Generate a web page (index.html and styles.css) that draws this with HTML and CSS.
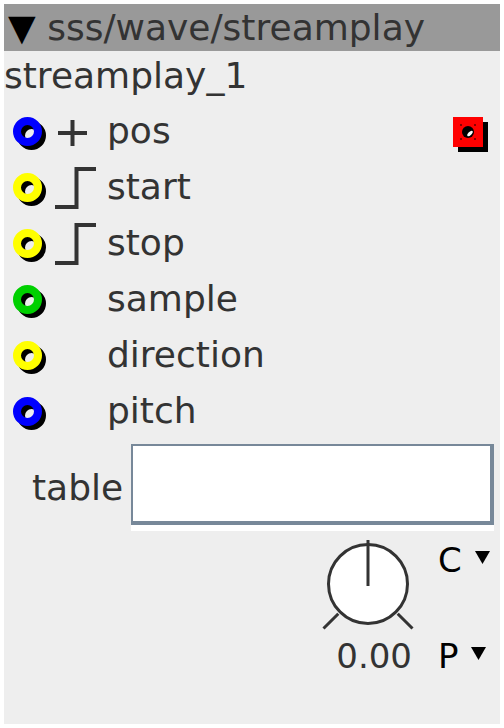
FILE: index.html
```html
<!DOCTYPE html>
<html lang="en">
<head>
    <meta charset="UTF-8">
    <meta name="viewport" content="width=device-width, initial-scale=1.0">
    <title>streamplay</title>
    <link rel="stylesheet" href="styles.css">
</head>
<body>
    <div class="panel">
        <!-- Node header -->
        <div class="head"><span class="arrow">▼</span> sss/wave/streamplay</div>
        <div class="name">streamplay_1</div>

        <!-- Inlets -->
        <div class="ports">
            <div class="port">
                <svg class="jack" width="38" height="38"><circle cx="18.5" cy="23.5" r="10.5" class="shade"/><circle cx="14.5" cy="19.5" r="10.5" stroke="#0000ff"/></svg>
                <svg class="kind" width="46" height="46"><path d="M5 25H34M19.5 12V38"/></svg>
                <span class="label">pos</span>
                <svg class="led" width="36" height="36">
                    <rect x="5" y="5" width="30" height="30" fill="#000"/>
                    <rect x="0" y="0" width="30" height="30" fill="#ff0000"/>
                    <rect x="7" y="7" width="2" height="2" fill="#800"/>
                    <rect x="21" y="7" width="2" height="2" fill="#800"/>
                    <rect x="7" y="21" width="2" height="2" fill="#800"/>
                    <rect x="21" y="21" width="2" height="2" fill="#800"/>
                    <circle cx="15" cy="15" r="6" fill="#000"/>
                    <ellipse cx="17" cy="16.5" rx="3.5" ry="1.6" fill="#fff" transform="rotate(-45 17 16.5)"/>
                </svg>
            </div>
            <div class="port">
                <svg class="jack" width="38" height="38"><circle cx="18.5" cy="23.5" r="10.5" class="shade"/><circle cx="14.5" cy="19.5" r="10.5" stroke="#ffff00"/></svg>
                <svg class="kind" width="46" height="46"><path d="M2 43H23.5V5H43"/></svg>
                <span class="label">start</span>
            </div>
            <div class="port">
                <svg class="jack" width="38" height="38"><circle cx="18.5" cy="23.5" r="10.5" class="shade"/><circle cx="14.5" cy="19.5" r="10.5" stroke="#ffff00"/></svg>
                <svg class="kind" width="46" height="46"><path d="M2 43H23.5V5H43"/></svg>
                <span class="label">stop</span>
            </div>
            <div class="port">
                <svg class="jack" width="38" height="38"><circle cx="18.5" cy="23.5" r="10.5" class="shade"/><circle cx="14.5" cy="19.5" r="10.5" stroke="#00d000"/></svg>
                <span></span>
                <span class="label">sample</span>
            </div>
            <div class="port">
                <svg class="jack" width="38" height="38"><circle cx="18.5" cy="23.5" r="10.5" class="shade"/><circle cx="14.5" cy="19.5" r="10.5" stroke="#ffff00"/></svg>
                <span></span>
                <span class="label">direction</span>
            </div>
            <div class="port">
                <svg class="jack" width="38" height="38"><circle cx="18.5" cy="23.5" r="10.5" class="shade"/><circle cx="14.5" cy="19.5" r="10.5" stroke="#0000ff"/></svg>
                <span></span>
                <span class="label">pitch</span>
            </div>
        </div>

        <!-- Table name -->
        <div class="field">
            <label for="table">table</label>
            <div class="entry" id="table"></div>
        </div>

        <!-- Knob -->
        <div class="dial">
            <svg class="knob" width="96" height="96">
                <circle cx="48" cy="48" r="39.5"/>
                <path d="M48 4V50M18.3 77.7L3.5 92.5M77.7 77.7L92.5 92.5"/>
            </svg>
            <div class="mode">C <svg class="tri" width="15" height="13"><path d="M0 0H15L7.5 13Z"/></svg></div>
            <div class="value">0.00</div>
            <div class="mode low">P <svg class="tri" width="15" height="13"><path d="M0 0H15L7.5 13Z"/></svg></div>
        </div>
    </div>
</body>
</html>
```

FILE: styles.css
```css
body {
    margin: 4px;
    background-color: #fff;
    font-family: "DejaVu Sans", sans-serif;
    color: #333;
}

.panel {
    width: 496px;
    min-height: 720px;
    background-color: #eee;
}

.head {
    height: 47px;
    line-height: 47px;
    padding-left: 4px;
    background-color: #999;
    font-size: 36px;
    white-space: nowrap;
    overflow: hidden;
}

.arrow {
    color: #000;
}

.name {
    font-size: 36px;
    line-height: 50px;
    padding-bottom: 2px;
}

/* Inlet rows */
.port {
    display: grid;
    grid-template-columns: 38px 56px 1fr auto;
    align-items: center;
    height: 56px;
    padding-left: 9px;
}

.jack circle {
    fill: none;
    stroke-width: 8;
}

.jack .shade {
    stroke: #000;
}

.kind {
    margin-left: 2px;
}

.kind path {
    fill: none;
    stroke: #333;
    stroke-width: 4;
}

.label {
    font-size: 36px;
    line-height: 56px;
}

.led {
    align-self: start;
    margin-top: 14px;
    margin-right: 11px;
}

/* Table field */
.field {
    display: flex;
    align-items: flex-start;
    margin-top: 5px;
}

.field label {
    font-size: 36px;
    line-height: 40px;
    margin-top: 24px;
    padding-left: 28px;
    width: 99px;
}

.entry {
    flex: 1;
    height: 81px;
    margin-right: 6px;
    box-sizing: border-box;
    background-color: #fff;
    border-style: solid;
    border-color: #778899;
    border-width: 2px 4px 4px 2px;
    box-shadow: 0 6px 0 #fff;
}

/* Knob and mode selectors */
.dial {
    display: grid;
    grid-template-columns: 96px 54px;
    grid-template-rows: 96px auto;
    column-gap: 22px;
    justify-content: end;
    padding-right: 8px;
    margin-top: 11px;
}

.knob circle {
    fill: #fff;
    stroke: #333;
    stroke-width: 3;
}

.knob path {
    stroke: #333;
    stroke-width: 3;
}

.mode {
    font-size: 34px;
    line-height: 40px;
    padding-top: 4px;
    color: #000;
    white-space: nowrap;
}

.mode.low {
    line-height: 48px;
    padding-top: 0;
}

.tri {
    vertical-align: 8px;
    margin-left: 2px;
}

.value {
    font-size: 34px;
    line-height: 48px;
    text-align: right;
    padding-right: 4px;
}
```
